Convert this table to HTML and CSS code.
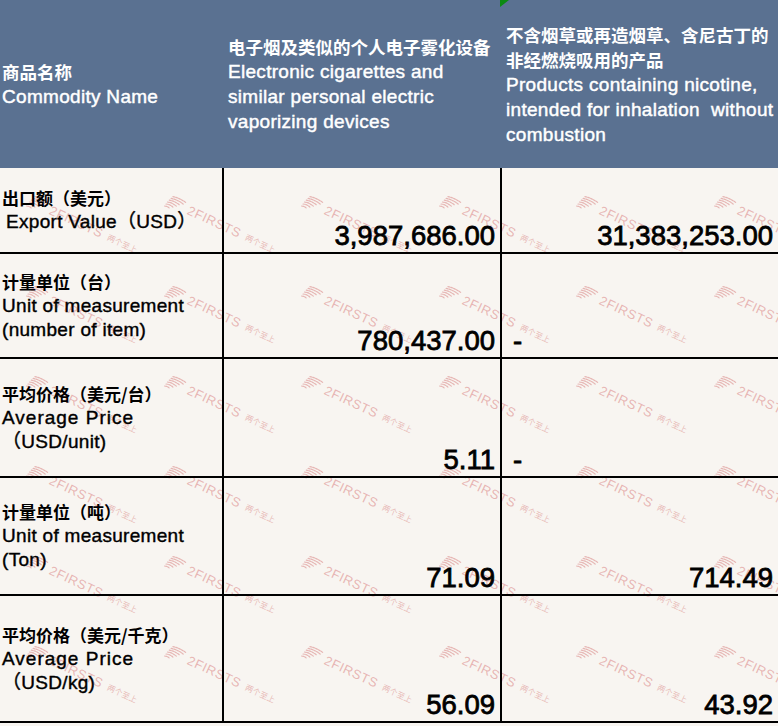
FILE: index.html
```html
<!DOCTYPE html>
<html lang="zh">
<head>
<meta charset="utf-8">
<title>Export table</title>
<link rel="stylesheet" href="styles.css">
</head>
<body>
<svg class="defs" width="0" height="0" aria-hidden="true">
  <symbol id="wm-logo" viewBox="0 0 24 18">
    <g fill="none" stroke="currentColor" stroke-width="1.3" stroke-linecap="round" stroke-dasharray="2.2 1.2">
      <path d="M2 16 Q5 14.8 8 16"/>
      <path d="M2.5 13.3 Q6.5 11.8 11 13.3"/>
      <path d="M3 10.6 Q8 9 14 10.6"/>
      <path d="M4 7.9 Q10 6.2 17 7.9"/>
      <path d="M5 5.2 Q12 3.4 20 5.2"/>
      <path d="M6 2.5 Q14 0.6 22.5 2.5"/>
    </g>
  </symbol>
</svg>
<div class="sheet">
  <div class="head">
    <div class="hcell c1">
      <span class="zh">商品名称</span>
      <span class="en">Commodity Name</span>
    </div>
    <div class="hcell c2">
      <span class="zh">电子烟及类似的个人电子雾化设备</span>
      <span class="en">Electronic cigarettes and</span>
      <span class="en">similar personal electric</span>
      <span class="en">vaporizing devices</span>
    </div>
    <div class="hcell c3">
      <i class="marker"></i>
      <span class="zh">不含烟草或再造烟草、含尼古丁的</span>
      <span class="zh">非经燃烧吸用的产品</span>
      <span class="en">Products containing nicotine,</span>
      <span class="en">intended for inhalation&nbsp; without</span>
      <span class="en">combustion</span>
    </div>
  </div>
  <div class="body">
    <div class="watermarks" aria-hidden="true">
      <div class="wm"><div class="wm-in"><svg class="wm-logo"><use href="#wm-logo"/></svg><span class="wm-en">2FIRSTS</span><span class="wm-zh">两个至上</span></div></div>
      <div class="wm"><div class="wm-in"><svg class="wm-logo"><use href="#wm-logo"/></svg><span class="wm-en">2FIRSTS</span><span class="wm-zh">两个至上</span></div></div>
      <div class="wm"><div class="wm-in"><svg class="wm-logo"><use href="#wm-logo"/></svg><span class="wm-en">2FIRSTS</span><span class="wm-zh">两个至上</span></div></div>
      <div class="wm"><div class="wm-in"><svg class="wm-logo"><use href="#wm-logo"/></svg><span class="wm-en">2FIRSTS</span><span class="wm-zh">两个至上</span></div></div>
      <div class="wm"><div class="wm-in"><svg class="wm-logo"><use href="#wm-logo"/></svg><span class="wm-en">2FIRSTS</span><span class="wm-zh">两个至上</span></div></div>
      <div class="wm"><div class="wm-in"><svg class="wm-logo"><use href="#wm-logo"/></svg><span class="wm-en">2FIRSTS</span><span class="wm-zh">两个至上</span></div></div>

      <div class="wm"><div class="wm-in"><svg class="wm-logo"><use href="#wm-logo"/></svg><span class="wm-en">2FIRSTS</span><span class="wm-zh">两个至上</span></div></div>
      <div class="wm"><div class="wm-in"><svg class="wm-logo"><use href="#wm-logo"/></svg><span class="wm-en">2FIRSTS</span><span class="wm-zh">两个至上</span></div></div>
      <div class="wm"><div class="wm-in"><svg class="wm-logo"><use href="#wm-logo"/></svg><span class="wm-en">2FIRSTS</span><span class="wm-zh">两个至上</span></div></div>
      <div class="wm"><div class="wm-in"><svg class="wm-logo"><use href="#wm-logo"/></svg><span class="wm-en">2FIRSTS</span><span class="wm-zh">两个至上</span></div></div>
      <div class="wm"><div class="wm-in"><svg class="wm-logo"><use href="#wm-logo"/></svg><span class="wm-en">2FIRSTS</span><span class="wm-zh">两个至上</span></div></div>
      <div class="wm"><div class="wm-in"><svg class="wm-logo"><use href="#wm-logo"/></svg><span class="wm-en">2FIRSTS</span><span class="wm-zh">两个至上</span></div></div>

      <div class="wm"><div class="wm-in"><svg class="wm-logo"><use href="#wm-logo"/></svg><span class="wm-en">2FIRSTS</span><span class="wm-zh">两个至上</span></div></div>
      <div class="wm"><div class="wm-in"><svg class="wm-logo"><use href="#wm-logo"/></svg><span class="wm-en">2FIRSTS</span><span class="wm-zh">两个至上</span></div></div>
      <div class="wm"><div class="wm-in"><svg class="wm-logo"><use href="#wm-logo"/></svg><span class="wm-en">2FIRSTS</span><span class="wm-zh">两个至上</span></div></div>
      <div class="wm"><div class="wm-in"><svg class="wm-logo"><use href="#wm-logo"/></svg><span class="wm-en">2FIRSTS</span><span class="wm-zh">两个至上</span></div></div>
      <div class="wm"><div class="wm-in"><svg class="wm-logo"><use href="#wm-logo"/></svg><span class="wm-en">2FIRSTS</span><span class="wm-zh">两个至上</span></div></div>
      <div class="wm"><div class="wm-in"><svg class="wm-logo"><use href="#wm-logo"/></svg><span class="wm-en">2FIRSTS</span><span class="wm-zh">两个至上</span></div></div>

      <div class="wm"><div class="wm-in"><svg class="wm-logo"><use href="#wm-logo"/></svg><span class="wm-en">2FIRSTS</span><span class="wm-zh">两个至上</span></div></div>
      <div class="wm"><div class="wm-in"><svg class="wm-logo"><use href="#wm-logo"/></svg><span class="wm-en">2FIRSTS</span><span class="wm-zh">两个至上</span></div></div>
      <div class="wm"><div class="wm-in"><svg class="wm-logo"><use href="#wm-logo"/></svg><span class="wm-en">2FIRSTS</span><span class="wm-zh">两个至上</span></div></div>
      <div class="wm"><div class="wm-in"><svg class="wm-logo"><use href="#wm-logo"/></svg><span class="wm-en">2FIRSTS</span><span class="wm-zh">两个至上</span></div></div>
      <div class="wm"><div class="wm-in"><svg class="wm-logo"><use href="#wm-logo"/></svg><span class="wm-en">2FIRSTS</span><span class="wm-zh">两个至上</span></div></div>
      <div class="wm"><div class="wm-in"><svg class="wm-logo"><use href="#wm-logo"/></svg><span class="wm-en">2FIRSTS</span><span class="wm-zh">两个至上</span></div></div>

      <div class="wm"><div class="wm-in"><svg class="wm-logo"><use href="#wm-logo"/></svg><span class="wm-en">2FIRSTS</span><span class="wm-zh">两个至上</span></div></div>
      <div class="wm"><div class="wm-in"><svg class="wm-logo"><use href="#wm-logo"/></svg><span class="wm-en">2FIRSTS</span><span class="wm-zh">两个至上</span></div></div>
      <div class="wm"><div class="wm-in"><svg class="wm-logo"><use href="#wm-logo"/></svg><span class="wm-en">2FIRSTS</span><span class="wm-zh">两个至上</span></div></div>
      <div class="wm"><div class="wm-in"><svg class="wm-logo"><use href="#wm-logo"/></svg><span class="wm-en">2FIRSTS</span><span class="wm-zh">两个至上</span></div></div>
      <div class="wm"><div class="wm-in"><svg class="wm-logo"><use href="#wm-logo"/></svg><span class="wm-en">2FIRSTS</span><span class="wm-zh">两个至上</span></div></div>
      <div class="wm"><div class="wm-in"><svg class="wm-logo"><use href="#wm-logo"/></svg><span class="wm-en">2FIRSTS</span><span class="wm-zh">两个至上</span></div></div>

      <div class="wm"><div class="wm-in"><svg class="wm-logo"><use href="#wm-logo"/></svg><span class="wm-en">2FIRSTS</span><span class="wm-zh">两个至上</span></div></div>
      <div class="wm"><div class="wm-in"><svg class="wm-logo"><use href="#wm-logo"/></svg><span class="wm-en">2FIRSTS</span><span class="wm-zh">两个至上</span></div></div>
      <div class="wm"><div class="wm-in"><svg class="wm-logo"><use href="#wm-logo"/></svg><span class="wm-en">2FIRSTS</span><span class="wm-zh">两个至上</span></div></div>
      <div class="wm"><div class="wm-in"><svg class="wm-logo"><use href="#wm-logo"/></svg><span class="wm-en">2FIRSTS</span><span class="wm-zh">两个至上</span></div></div>
      <div class="wm"><div class="wm-in"><svg class="wm-logo"><use href="#wm-logo"/></svg><span class="wm-en">2FIRSTS</span><span class="wm-zh">两个至上</span></div></div>
      <div class="wm"><div class="wm-in"><svg class="wm-logo"><use href="#wm-logo"/></svg><span class="wm-en">2FIRSTS</span><span class="wm-zh">两个至上</span></div></div>

      <div class="wm"><div class="wm-in"><svg class="wm-logo"><use href="#wm-logo"/></svg><span class="wm-en">2FIRSTS</span><span class="wm-zh">两个至上</span></div></div>
      <div class="wm"><div class="wm-in"><svg class="wm-logo"><use href="#wm-logo"/></svg><span class="wm-en">2FIRSTS</span><span class="wm-zh">两个至上</span></div></div>
      <div class="wm"><div class="wm-in"><svg class="wm-logo"><use href="#wm-logo"/></svg><span class="wm-en">2FIRSTS</span><span class="wm-zh">两个至上</span></div></div>
      <div class="wm"><div class="wm-in"><svg class="wm-logo"><use href="#wm-logo"/></svg><span class="wm-en">2FIRSTS</span><span class="wm-zh">两个至上</span></div></div>
      <div class="wm"><div class="wm-in"><svg class="wm-logo"><use href="#wm-logo"/></svg><span class="wm-en">2FIRSTS</span><span class="wm-zh">两个至上</span></div></div>
      <div class="wm"><div class="wm-in"><svg class="wm-logo"><use href="#wm-logo"/></svg><span class="wm-en">2FIRSTS</span><span class="wm-zh">两个至上</span></div></div>
    </div>

    <div class="rows">
      <div class="cell label">
        <span class="zh">出口额（美元）</span>
        <span class="en indent">Export Value（USD）</span>
      </div>
      <div class="cell num mid">3,987,686.00</div>
      <div class="cell num last">31,383,253.00</div>

      <div class="cell label">
        <span class="zh">计量单位（台）</span>
        <span class="en">Unit of measurement</span>
        <span class="en">(number of item)</span>
      </div>
      <div class="cell num mid">780,437.00</div>
      <div class="cell dash last">-</div>

      <div class="cell label">
        <span class="zh">平均价格（美元/台）</span>
        <span class="en wide">Average Price</span>
        <span class="en">（USD/unit)</span>
      </div>
      <div class="cell num mid">5.11</div>
      <div class="cell dash last">-</div>

      <div class="cell label">
        <span class="zh">计量单位（吨）</span>
        <span class="en">Unit of measurement</span>
        <span class="en">(Ton)</span>
      </div>
      <div class="cell num mid">71.09</div>
      <div class="cell num last">714.49</div>

      <div class="cell label">
        <span class="zh">平均价格（美元/千克）</span>
        <span class="en wide">Average Price</span>
        <span class="en">（USD/kg)</span>
      </div>
      <div class="cell num mid">56.09</div>
      <div class="cell num last">43.92</div>
    </div>
  </div>
</div>
</body>
</html>
```
FILE: styles.css
```css
* {
  box-sizing: border-box;
}

html,
body {
  margin: 0;
  padding: 0;
}

body {
  width: 778px;
  height: 726px;
  overflow: hidden;
  background: #f8f5f1;
  font-family: "Liberation Sans", "Noto Sans CJK SC", sans-serif;
}

.defs {
  position: absolute;
  width: 0;
  height: 0;
}

.sheet {
  display: flex;
  flex-direction: column;
  width: 778px;
  height: 726px;
}

/* ---------- header ---------- */
.head {
  display: grid;
  grid-template-columns: 224px 278px 276px;
  height: 168px;
  background: #5a7191;
  color: #fff;
}

.hcell {
  position: relative;
  display: flex;
  flex-direction: column;
  justify-content: center;
  padding: 0 2px 0 4px;
  line-height: 25px;
  white-space: nowrap;
}

.hcell.c1 {
  padding-left: 2px;
}

.hcell .zh {
  font-family: "Noto Sans CJK SC", sans-serif;
  font-weight: 700;
  font-size: 17.5px;
}

.hcell .en {
  font-size: 19px;
  letter-spacing: 0.3px;
  -webkit-text-stroke: 0.45px #fff;
}

.marker {
  position: absolute;
  top: 0;
  left: -2px;
  width: 0;
  height: 0;
  border-top: 7px solid #0b8a12;
  border-right: 9px solid transparent;
}

/* ---------- body ---------- */
.body {
  position: relative;
  flex: 1;
  overflow: hidden;
  background: #f8f5f1;
}

.watermarks {
  position: absolute;
  top: 0;
  left: -40px;
  display: grid;
  grid-template-columns: repeat(6, 137.5px);
  grid-template-rows: repeat(7, 90px);
  pointer-events: none;
  color: rgba(214, 118, 118, 0.5);
}

.wm {
  position: relative;
}

.wm-in {
  display: flex;
  align-items: center;
  gap: 3px;
  margin-left: 65px;
  margin-top: 34px;
  white-space: nowrap;
  transform: rotate(25deg);
  transform-origin: 25px 8px;
}

.wm-logo {
  width: 22px;
  height: 16px;
  flex: none;
}

.wm-en {
  font-family: "Liberation Sans", sans-serif;
  font-size: 13px;
  letter-spacing: 0.6px;
  line-height: 14px;
}

.wm-zh {
  margin-left: 3px;
  font-family: "Noto Sans CJK SC", sans-serif;
  font-size: 8px;
  line-height: 10px;
}

.rows {
  position: relative;
  display: grid;
  grid-template-columns: 224px 278px 276px;
  grid-template-rows: 86px 105px 119px 118px 127px;
  color: #000;
}

.cell {
  display: flex;
  border-bottom: 2px solid #000;
  white-space: nowrap;
}

.label {
  flex-direction: column;
  justify-content: center;
  padding-left: 2px;
  border-right: 2px solid #000;
  line-height: 24px;
}

.label .zh {
  font-family: "Noto Sans CJK SC", sans-serif;
  font-weight: 700;
  font-size: 17px;
}

.label .en {
  font-size: 19px;
  letter-spacing: 0.3px;
  -webkit-text-stroke: 0.4px #000;
}

.label .en.wide {
  letter-spacing: 1px;
}

.label .en.indent {
  padding-left: 4px;
}

.num,
.dash {
  align-items: flex-end;
  padding-bottom: 2px;
  font-size: 27.5px;
  line-height: 28px;
  -webkit-text-stroke: 0.8px #000;
}

.num {
  justify-content: flex-end;
  padding-right: 5px;
}

.dash {
  justify-content: flex-start;
  padding-left: 11px;
}

.mid {
  border-right: 2px solid #000;
}
```
